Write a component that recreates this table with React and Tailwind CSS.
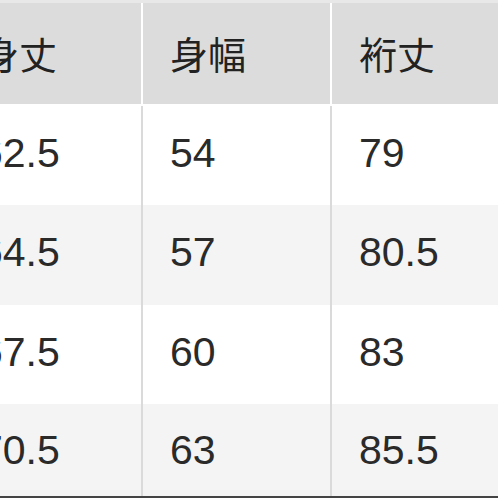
import React from "react";

const rows = [
  ["62.5", "54", "79"],
  ["64.5", "57", "80.5"],
  ["67.5", "60", "83"],
  ["70.5", "63", "85.5"],
];
const heights = ["h-[99px]", "h-[100px]", "h-[99px]", "h-[92px]"];

export default function App() {
  return (
    <div className="w-[498px] h-[498px] overflow-hidden bg-white flex flex-col" style={{ fontFamily: '"Liberation Sans", Arial, sans-serif' }}>
      <div className="h-[3px] bg-[#e8e8e8] shrink-0" />
      <div className="flex h-[101px] shrink-0 gap-[2px] ml-[-46px] bg-white text-[38px] text-[#222]" style={{ fontFamily: '"Noto Sans CJK JP", sans-serif' }}>
        {["身丈", "身幅", "裄丈"].map((h, i) => (
          <div key={i} className="w-[187px] shrink-0 bg-[#dcdcdc] flex items-center pl-[27px] pb-[2px] leading-none">
            {h}
          </div>
        ))}
      </div>
      <div className="h-[2px] bg-white shrink-0" />
      {rows.map((r, ri) => (
        <div key={ri} className={`flex ${heights[ri]} shrink-0 gap-[2px] ml-[-46px] bg-[#dadada]`}>
          {r.map((c, ci) => (
            <div
              key={ci}
              className={`w-[187px] shrink-0 flex items-center ${ci === 0 ? "pl-[26px]" : "pl-[27px]"} ${ri === 3 ? "pb-[0px]" : "pb-[5px]"} text-[41px] leading-none text-[#2a2a2a] ${ri % 2 === 1 ? "bg-[#f4f4f4]" : "bg-white"}`}
            >
              {c}
            </div>
          ))}
        </div>
      ))}
      <div className="h-[2px] bg-[#444] shrink-0" />
    </div>
  );
}
